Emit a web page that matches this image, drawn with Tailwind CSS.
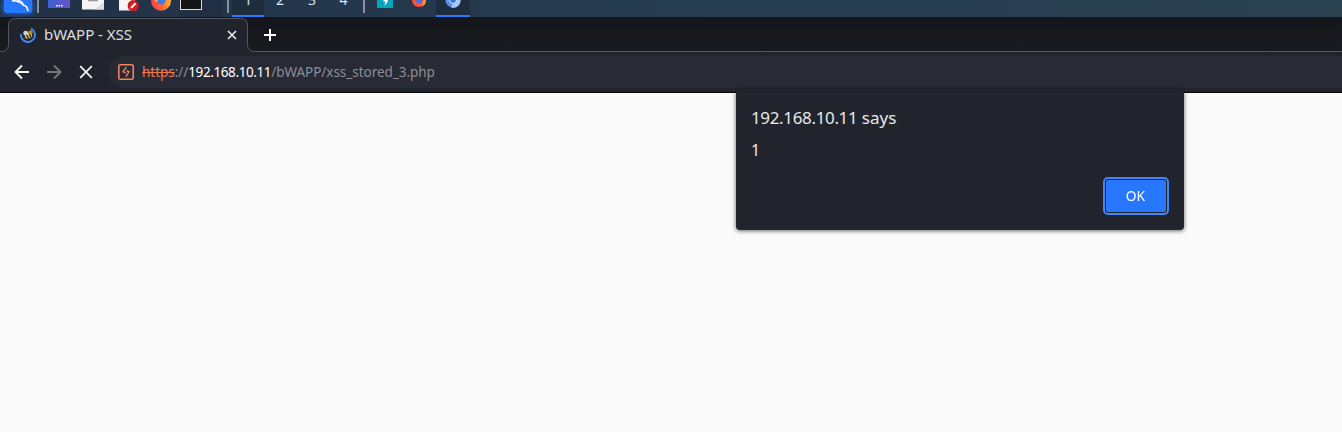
<!DOCTYPE html>
<html lang="en">
<head>
<meta charset="utf-8">
<title>bWAPP - XSS</title>
<script src="https://cdn.jsdelivr.net/npm/@tailwindcss/browser@4"></script>
</head>
<body class="h-[432px] w-[1342px] overflow-hidden bg-[#fafafa] font-['Noto_Sans',sans-serif]">
<div class="relative flex h-[432px] flex-col">
  <!-- Desktop panel -->
  <div class="flex h-[17px] shrink-0 items-start overflow-hidden bg-linear-to-r from-[#223248] via-[#263c50] to-[#2a4150]">
    <svg class="ml-1 h-[14px] w-7 shrink-0 drop-shadow-[0_0_3px_#2777ff]" viewBox="0 0 28 14"><path d="M0 0h28v10q0 3-3 3H3q-3 0-3-3z" fill="#2777ff"/><path d="M8 .8C13 .6 18 2.500 19.500 5.300C22 5.500 23.500 7.500 24 11" stroke="#fff" stroke-width="1.600" fill="none"/><path d="M13 0C16 .5 19 2.500 19.500 5.500" stroke="#fff" stroke-width="1.200" fill="none"/></svg>
    <div class="ml-[5px] h-[13px] w-0.5 shrink-0 bg-[#8b919b]"></div>
    <svg class="ml-[9px] h-2 w-[22px] shrink-0" viewBox="0 0 22 8"><defs><linearGradient id="desk"><stop stop-color="#3b63d6"/><stop offset="1" stop-color="#6a50c8"/></linearGradient></defs><path d="M0 0h22v8H0z" fill="url(#desk)"/><path d="M8 5h1.500v1.500H8zM10.500 5H12v1.500h-1.500zM13 5h1.500v1.500H13z" fill="#fff"/></svg>
    <svg class="ml-3 h-[10px] w-[22px] shrink-0" viewBox="0 0 22 10"><path d="M0 0h22v9.500H0z" fill="#f4f4f4"/><path d="M12 9.500L22 2v7.500z" fill="#dedede"/><path d="M6 0h10v1.300H6z" fill="#999"/></svg>
    <svg class="ml-[15px] h-3 w-5 shrink-0" viewBox="0 0 20 12"><path d="M0 0h16v10.500H0z" fill="#f4f4f4"/><circle cx="14.200" cy="5.700" r="5.600" fill="#d31a20"/><path d="M11.300 8.600l.7-2.200L15.800 2.600l1.500 1.500L13.500 8z" fill="#fff"/></svg>
    <svg class="ml-3 h-3 w-5 shrink-0" viewBox="0 0 20 12"><defs><linearGradient id="fox" x1="0" x2="1"><stop stop-color="#ff3a50"/><stop offset=".6" stop-color="#ff6a32"/><stop offset="1" stop-color="#ffbd35"/></linearGradient></defs><circle cx="10" cy=".8" r="10" fill="url(#fox)"/><circle cx="10" cy="0" r="4.500" fill="#3f7be8"/><path d="M3 0L7 0 6.500 2Q4.500 3 3 0z" fill="#ff9b35"/></svg>
    <div class="ml-2 flex h-[17px] w-[44px] shrink-0 bg-[#1f2e40]/70 pl-px"><div class="h-[10px] w-[22px] border border-t-0 border-[#dedede] bg-[#151515]"></div></div>
    <div class="ml-[5px] -mr-px h-[13px] w-0.5 shrink-0 -translate-x-px bg-[#8b919b]"></div>
    <div class="ml-[3px] flex shrink-0 text-center text-[14px] leading-4 text-[#dfe4ea]">
      <div class="h-[17px] w-8 border-b-2 border-[#2777ff] bg-[#1e2d3d]"><div class="-mt-2">1</div></div>
      <div class="w-8"><div class="-mt-2">2</div></div>
      <div class="w-8"><div class="-mt-2">3</div></div>
      <div class="w-[31px]"><div class="-mt-2">4</div></div>
    </div>
    <div class="ml-1 h-[13px] w-0.5 shrink-0 bg-[#8b919b]"></div>
    <svg class="ml-3 h-2 w-4 shrink-0" viewBox="0 0 16 8"><path d="M0 0h16v8H0z" fill="#06a5bd"/><path d="M6.500 0v1.500h2L7.500 6 10.800 1.500V0z" fill="#fff"/></svg>
    <svg class="ml-[19px] h-2 w-[14px] shrink-0" viewBox="0 0 14 8"><circle cx="7" cy="0" r="7" fill="#ff5038"/><path d="M11.500 0H14a7 7 0 0 1-4 6.400z" fill="#ff9a36"/><circle cx="7" cy="0" r="3.300" fill="#4a72dd"/></svg>
    <div class="ml-[10px] flex h-[17px] w-[34px] shrink-0 justify-center border-b-2 border-[#2777ff] bg-[#1e2d3d]"><svg class="h-2 w-4" viewBox="0 0 16 8"><circle cx="8" cy="0" r="7.600" fill="#5b8ceb"/><path d="M8 3.600L6 7.600A7.600 7.600 0 0 0 15.600 0H11z" fill="#a5c7fb"/><circle cx="8" cy="0" r="3.500" fill="#3d73d9" stroke="#d4e4ff"/></svg></div>
  </div>

  <!-- Tab strip -->
  <div class="flex h-[35px] shrink-0 bg-linear-to-b from-[#15161b] to-[#1a1b1f]">
    <div class="relative h-[35px] w-[256px] shrink-0">
      <svg class="absolute inset-0" width="256" height="35" viewBox="0 0 256 35"><path d="M0 34.500H1Q8.500 34.500 8.500 27V8.500Q8.500 1.500 15.500 1.500H240.500Q247.500 1.500 247.500 8.500V27Q247.500 34.500 255 34.500H256V36H0z" fill="#22242d"/><path d="M0 34.500H1Q8.500 34.500 8.500 27V8.500Q8.500 1.500 15.500 1.500H240.500Q247.500 1.500 247.500 8.500V27Q247.500 34.500 255 34.500H256" fill="none" stroke="#55575d"/></svg>
      <div class="relative flex h-[35px] items-center pl-5">
        <svg class="h-4 w-4" viewBox="0 0 16 16"><path d="M11 1.700A7 7 0 1 1 1 7" fill="none" stroke="#4285f4" stroke-width="1.900"/><ellipse cx="8.500" cy="8.700" rx="3.800" ry="2.900" transform="rotate(-20 8.500 8.700)" fill="#e6b129"/><path d="M6.500 8l2.500 4M9.500 7l1.500 3.500" stroke="#252525" stroke-width="1.300"/><circle cx="10.500" cy="5.300" r="2" fill="#b98a2b"/><ellipse cx="5.700" cy="6" rx="2.500" ry="2.300" fill="#c3d3ea"/></svg>
        <span class="mb-0.5 ml-2 w-[182px] text-[15px] leading-5 tracking-[-0.02px] text-[#dedfe1]">bWAPP - XSS</span>
        <svg class="h-3 w-3" viewBox="0 0 12 12"><path d="M2 2l8 8M10 2l-8 8" stroke="#e8e8e8" stroke-width="1.700"/></svg>
      </div>
    </div>
    <div class="flex flex-1 items-center border-b border-[#55575d] pt-px pl-2"><svg class="h-3 w-3" viewBox="0 0 12 12"><path d="M6 0v12M0 6h12" stroke="#fff" stroke-width="2"/></svg></div>
  </div>

  <!-- Navigation bar -->
  <div class="flex h-[41px] shrink-0 items-center border-b border-[#08090c] bg-[#22242d] pl-[14px]">
    <svg class="h-4 w-4" viewBox="0 0 16 16"><path d="M15 8H2M8 1.500L1.500 8 8 14.500" fill="none" stroke="#f5f5f5" stroke-width="1.900"/></svg>
    <svg class="ml-4 h-4 w-4" viewBox="0 0 16 16"><path d="M1 8h13M8 1.500L14.500 8 8 14.500" fill="none" stroke="#77797e" stroke-width="1.900"/></svg>
    <svg class="ml-4 h-4 w-4" viewBox="0 0 16 16"><path d="M2.200 2.200l11.600 11.600M13.800 2.200L2.200 13.800" stroke="#f5f5f5" stroke-width="1.700"/></svg>
    <div class="ml-[14px] flex h-8 flex-1 items-center rounded-l-full bg-[#282a35] pl-[10px]">
      <svg class="h-4 w-4 shrink-0" viewBox="0 0 16 16"><rect x=".8" y=".8" width="14.400" height="14.400" rx="1.500" fill="none" stroke="#f0845c" stroke-width="1.600"/><path d="M8.300 3.200L5 7.800l2.800 1.100M8.500 6.600L11 7.800 7.800 12.700" fill="none" stroke="#f0845c" stroke-width="1.300"/></svg>
      <span class="ml-2 text-[13.5px] leading-5 tracking-[-0.03px] whitespace-nowrap text-[#8c8e95]"><span class="text-[#f0774c] line-through">https</span>://<span class="tracking-[-0.4px] text-white">192.168.10.11</span>/bWAPP/xss_stored_3.php</span>
    </div>
  </div>

  <!-- Alert dialog -->
  <div class="absolute top-[89px] left-[736px] flex h-[141px] w-[448px] flex-col rounded bg-[#22242d] pt-[17px] pr-4 pl-[15px] text-[#e8e8e9] shadow-[0_1px_4px_rgba(0,0,0,0.6)]">
    <div class="text-[17px] leading-6"><span class="tracking-[-0.35px]">192.168.10.11</span> says</div>
    <div class="mt-2 text-[16px] leading-6">1</div>
    <button class="mt-[18px] mr-0.5 h-8 w-[60px] self-end rounded-[2px] bg-[#2777ff] pb-0.5 text-[15px] leading-5 text-white shadow-[0_0_0_1px_#22242d,0_0_0_3px_#4285f4]"><span class="inline-block scale-x-[0.92]">OK</span></button>
  </div>
</div>
</body>
</html>
